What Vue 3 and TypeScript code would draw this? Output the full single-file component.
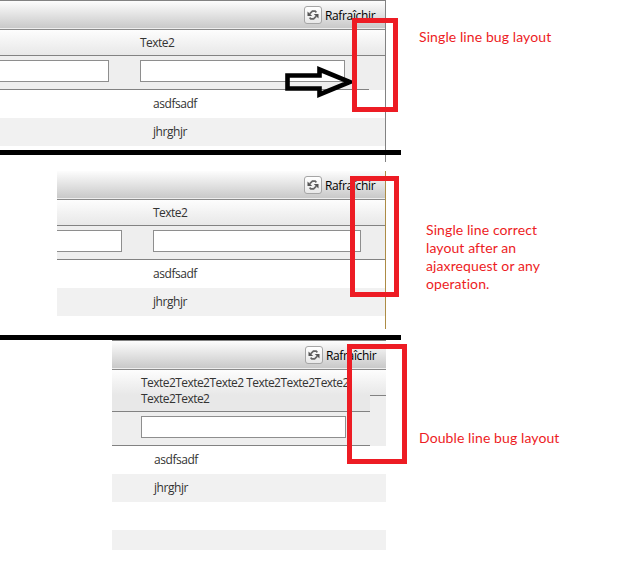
<template>
  <div class="board">
    <section
      v-for="panel in panels"
      :key="panel.id"
      class="panel"
      :class="`panel--${panel.id}`"
    >
      <div class="panel__toolbar">
        <button class="refresh" type="button">
          <span class="refresh__icon">
            <svg width="12" height="12" viewBox="0 0 12 12">
              <path class="refresh__head" d="M0.5 2.5V7H5.2Z" />
              <path class="refresh__arc" d="M2.6 4.9L5.4 2.2H8.2L9.4 3.3" />
              <path class="refresh__head" d="M11.5 9.5V5H6.8Z" />
              <path class="refresh__arc" d="M9.4 7.1L6.6 9.8H3.8L2.6 8.7" />
            </svg>
          </span>
          <span class="refresh__label">Rafraîchir</span>
        </button>
      </div>

      <div class="panel__head">
        <div class="panel__columns">
          <div class="panel__titles">
            <span class="panel__title">
              <span v-for="line in panel.title" :key="line">{{ line }}</span>
            </span>
          </div>
          <div class="panel__filters">
            <input v-if="panel.leading" class="filter filter--leading" type="text" />
            <input class="filter filter--main" type="text" />
          </div>
        </div>
        <!-- space reserved above the vertical scrollbar -->
        <div v-if="panel.gutter" class="panel__gutter">
          <div class="panel__gutter-top"></div>
          <div class="panel__gutter-fill"></div>
        </div>
      </div>

      <div class="panel__rows">
        <div v-for="(row, i) in panel.rows" :key="i" class="panel__row">
          <span>{{ row }}</span>
        </div>
      </div>
    </section>

    <!-- Freehand marks laid over the panels -->
    <div class="divider divider--first"></div>
    <div class="divider divider--second"></div>
    <svg class="arrow" width="70" height="34" viewBox="0 0 70 34">
      <path d="M3.5 9.5H35.5V3.5L66 16L35.5 28.5V22.5H3.5Z" />
    </svg>
    <div v-for="panel in panels" :key="panel.id" class="mark" :class="`mark--${panel.id}`"></div>
    <p v-for="panel in panels" :key="panel.id" class="note" :class="`note--${panel.id}`">
      <span v-for="line in panel.note" :key="line">{{ line }}</span>
    </p>
  </div>
</template>

<script setup lang="ts">
interface Panel {
  id: "single" | "correct" | "double";
  title: string[];
  rows: string[];
  /** Whether the cut-off filter box of the previous column is visible. */
  leading: boolean;
  gutter: boolean;
  note: string[];
}

const panels: Panel[] = [
  {
    id: "single",
    title: ["Texte2"],
    rows: ["asdfsadf", "jhrghjr"],
    leading: true,
    gutter: true,
    note: ["Single line bug layout"],
  },
  {
    id: "correct",
    title: ["Texte2"],
    rows: ["asdfsadf", "jhrghjr"],
    leading: true,
    gutter: false,
    note: ["Single line correct", "layout after an", "ajaxrequest or any", "operation."],
  },
  {
    id: "double",
    title: ["Texte2Texte2Texte2 Texte2Texte2Texte2", "Texte2Texte2"],
    rows: ["asdfsadf", "jhrghjr", "", ""],
    leading: false,
    gutter: true,
    note: ["Double line bug layout"],
  },
];
</script>

<style>
body {
  background: #fff;
}
</style>

<style scoped>
.board {
  position: relative;
  width: 627px;
  height: 564px;
  overflow: hidden;
  background: #fff;
  color: #333;
  font: 12px/16px "Open Sans", "Noto Sans", sans-serif;
}

.board * {
  box-sizing: border-box;
}

.panel {
  width: 386px;
  border-right: 1px solid #828282;
}

.panel--single {
  height: 162px;
  border-top: 1px solid #828282;
}

.panel--correct {
  width: 329px;
  height: 158px;
  margin: 9px 0 0 57px;
  border-right-color: #ad8c45;
}

.panel--double {
  width: 274px;
  height: 210px;
  margin: 11px 0 0 112px;
  border-top: 1px solid #828282;
  border-right: 0;
}

.panel__toolbar {
  display: flex;
  justify-content: flex-end;
  height: 29px;
  padding: 5px 10px 0 0;
  border-bottom: 1px solid #8a8a8a;
  background: linear-gradient(#fdfdfd, #c9c9c9 27px, #eee 27px);
}

.refresh {
  display: flex;
  gap: 3px;
  height: 18px;
  padding: 0;
  border: 0;
  background: none;
  color: #000;
  font: inherit;
}

.refresh__icon {
  display: flex;
  align-items: center;
  justify-content: center;
  width: 18px;
  height: 18px;
  border: 1px solid #a5a5a5;
  border-radius: 3px;
  background: linear-gradient(#fff, #e8e8e8);
}

.refresh__head {
  fill: #555;
}

.refresh__arc {
  fill: none;
  stroke: #666;
  stroke-width: 1.7;
}

.refresh__label {
  width: 50px;
  line-height: 19px;
  letter-spacing: -0.35px;
  text-align: left;
  white-space: nowrap;
}

.panel__head {
  display: flex;
}

.panel__columns {
  flex: 1;
  min-width: 0;
}

.panel__titles {
  height: 26px;
  padding: 5px 0 0 140px;
  border-bottom: 1px solid #828282;
  background: linear-gradient(#fdfdfd, #e8e8e8);
}

.panel__title {
  display: flex;
  flex-direction: column;
  letter-spacing: -0.55px;
  white-space: nowrap;
}

.panel--correct .panel__titles {
  padding-left: 96px;
}

.panel--double .panel__titles {
  height: 42px;
  padding-left: 29px;
  background: linear-gradient(#fdfdfd, #e8e8e8 25px);
}

.panel__filters {
  display: flex;
  gap: 31px;
  height: 34px;
  padding-top: 4px;
  border-bottom: 1px solid #828282;
  background: #eee;
}

.panel--double .panel__filters {
  padding-left: 29px;
}

.filter {
  height: 22px;
  padding: 0 4px;
  border: 1px solid #8e8e8e;
  border-radius: 0;
  background: #fff;
}

.filter--leading {
  width: 109px;
  border-left: 0;
}

.panel--correct .filter--leading {
  width: 65px;
}

.filter--main {
  width: 205px;
}

.panel--correct .filter--main {
  width: 208px;
}

.panel__gutter {
  display: flex;
  flex-direction: column;
  width: 16px;
}

.panel__gutter-top {
  height: 26px;
  border-bottom: 1px solid #828282;
  background: linear-gradient(#fdfdfd, #e8e8e8);
}

.panel__gutter-fill {
  flex: 1;
  background: #eee;
}

.panel__row {
  height: 28px;
  padding: 6px 0 0 153px;
  letter-spacing: -0.45px;
}

.panel__row:nth-child(even) {
  background: #f1f1f1;
}

.panel--correct .panel__row {
  padding-left: 96px;
}

.panel--double .panel__row {
  padding-left: 42px;
}

.panel--double .panel__row:last-child {
  height: 20px;
}

.divider {
  position: absolute;
  left: 0;
  width: 401px;
  height: 5px;
  background: #000;
}

.divider--first {
  top: 150px;
}

.divider--second {
  top: 335px;
}

.arrow {
  position: absolute;
  top: 66px;
  left: 284px;
}

.arrow path {
  fill: none;
  stroke: #000;
  stroke-width: 4.6;
}

.mark {
  position: absolute;
  border: 5px solid #ed1c24;
}

.mark--single {
  top: 18px;
  left: 352px;
  width: 46px;
  height: 94px;
}

.mark--correct {
  top: 176px;
  left: 350px;
  width: 49px;
  height: 121px;
}

.mark--double {
  top: 344px;
  left: 347px;
  width: 60px;
  height: 120px;
}

.note {
  position: absolute;
  display: flex;
  flex-direction: column;
  margin: 0;
  color: #ed1c24;
  font: 14px/18px Lato, "Open Sans", sans-serif;
  letter-spacing: 0.1px;
  white-space: nowrap;
}

.note--single {
  top: 28px;
  left: 419px;
}

.note--correct {
  top: 221px;
  left: 426px;
}

.note--double {
  top: 429px;
  left: 419px;
}
</style>
